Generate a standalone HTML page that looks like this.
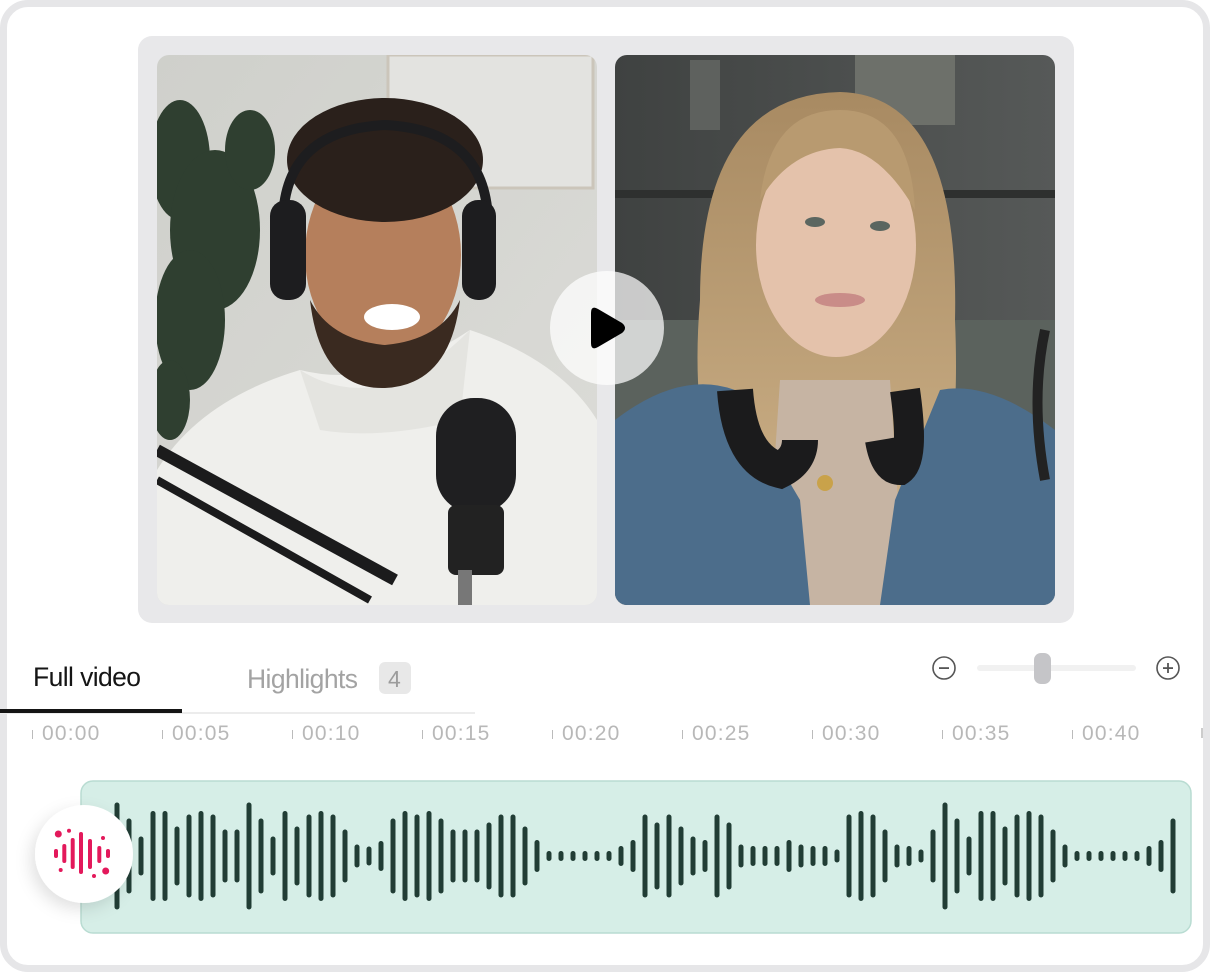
<!DOCTYPE html>
<html><head><meta charset="utf-8"><style>
*{margin:0;padding:0;box-sizing:border-box}
body{width:1210px;height:972px;background:#fff;position:relative;overflow:hidden;font-family:"Liberation Sans",sans-serif}
.card{position:absolute;left:0;top:0;width:1210px;height:972px;border:7px solid #e6e6e8;border-radius:28px;background:#fff}
.frame{position:absolute;left:138px;top:36px;width:936px;height:587px;background:#e8e8ea;border-radius:14px}
.t{position:absolute;font-size:26.5px;letter-spacing:-0.6px;line-height:30px}
.tl{position:absolute;top:722px;font-size:21px;letter-spacing:1.2px;color:#b8b8b8}
.tl i{display:inline-block;width:1px;height:9px;background:#bbb;margin-right:9px;vertical-align:1px}
</style></head><body>
<div class="card"></div>
<div class="frame"></div>
<svg style="position:absolute;left:0;top:0" width="1210" height="972">
<defs>
<clipPath id="cl"><rect x="157" y="55" width="440" height="550" rx="12"/></clipPath>
<clipPath id="cr"><rect x="615" y="55" width="440" height="550" rx="12"/></clipPath>
<linearGradient id="gl" x1="0" y1="0" x2="1" y2="1"><stop offset="0" stop-color="#cfd0cb"/><stop offset="1" stop-color="#dcdcd8"/></linearGradient>
<linearGradient id="gr" x1="0" y1="0" x2="1" y2="0"><stop offset="0" stop-color="#3f4241"/><stop offset="0.5" stop-color="#4b4e4d"/><stop offset="1" stop-color="#565958"/></linearGradient>
<linearGradient id="hair" x1="0" y1="0" x2="0" y2="1"><stop offset="0" stop-color="#a88a62"/><stop offset="1" stop-color="#c9ad84"/></linearGradient>
<filter id="sh" x="-50%" y="-50%" width="200%" height="200%"><feDropShadow dx="-4" dy="6" stdDeviation="8" flood-color="#000" flood-opacity="0.12"/></filter>
</defs>
<g clip-path="url(#cl)">
<rect x="157" y="55" width="440" height="550" fill="url(#gl)"/>
<rect x="388" y="55" width="205" height="133" fill="#e3e3e0" stroke="#cbc5ba" stroke-width="3"/>
<g fill="#2f3f30">
<ellipse cx="180" cy="160" rx="30" ry="60"/><ellipse cx="215" cy="230" rx="45" ry="80"/><ellipse cx="190" cy="320" rx="35" ry="70"/><ellipse cx="250" cy="150" rx="25" ry="40"/><ellipse cx="170" cy="400" rx="20" ry="40"/>
</g>
<path d="M157 470 Q200 400 300 370 Q380 390 470 330 Q560 360 597 420 L597 605 L157 605 Z" fill="#efefec"/>
<path d="M300 370 Q380 420 470 330 L460 420 Q380 440 320 430 Z" fill="#e4e4e0"/>
<ellipse cx="383" cy="255" rx="78" ry="105" fill="#b57f5c"/>
<path d="M310 300 Q320 390 385 388 Q450 385 460 300 Q440 340 385 345 Q330 340 310 300Z" fill="#3a2a20"/>
<ellipse cx="385" cy="160" rx="98" ry="62" fill="#2a201b"/>
<ellipse cx="392" cy="317" rx="28" ry="13" fill="#fff"/>
<path d="M283 220 Q285 130 385 125 Q485 130 488 220" fill="none" stroke="#1d1d1f" stroke-width="10"/>
<rect x="270" y="200" width="36" height="100" rx="16" fill="#1d1d1f"/>
<rect x="462" y="200" width="34" height="100" rx="16" fill="#1d1d1f"/>
<rect x="436" y="398" width="80" height="115" rx="38" fill="#1f1f21"/>
<rect x="448" y="505" width="56" height="70" rx="8" fill="#222"/>
<rect x="458" y="570" width="14" height="40" fill="#777"/>
<path d="M157 450 L395 580" stroke="#1b1b1c" stroke-width="12"/>
<path d="M157 480 L370 600" stroke="#1b1b1c" stroke-width="8"/>
</g>
<g clip-path="url(#cr)">
<rect x="615" y="55" width="440" height="550" fill="url(#gr)"/>
<rect x="855" y="55" width="100" height="70" fill="#6d706a"/>
<rect x="690" y="60" width="30" height="70" fill="#5e615e"/><rect x="615" y="190" width="440" height="8" fill="#2e302f"/>
<rect x="615" y="320" width="440" height="140" fill="#5b625d"/>
<path d="M700 300 Q700 95 840 92 Q960 95 955 320 Q960 440 940 500 L720 500 Q690 420 700 300Z" fill="url(#hair)"/>
<path d="M780 380 L890 380 L905 605 L765 605 Z" fill="#c6b4a3"/>
<ellipse cx="836" cy="245" rx="80" ry="112" fill="#e4c2ab"/>
<path d="M760 200 Q770 110 840 110 Q910 110 915 210 Q880 150 840 148 Q790 150 760 200Z" fill="#b89a70"/>
<ellipse cx="815" cy="222" rx="10" ry="5" fill="#5b6660"/><ellipse cx="880" cy="226" rx="10" ry="5" fill="#5b6660"/>
<ellipse cx="840" cy="300" rx="25" ry="7" fill="#c98c88"/>
<path d="M615 420 Q680 370 735 390 L800 500 L810 605 L615 605Z" fill="#4c6d8b"/>
<path d="M1055 430 Q990 380 940 390 L895 500 L880 605 L1055 605Z" fill="#4c6d8b"/>
<path d="M735 390 Q740 460 780 470 Q800 460 800 440" fill="none" stroke="#1b1b1c" stroke-width="36"/>
<path d="M880 440 Q885 470 900 470 Q915 460 905 390" fill="none" stroke="#1b1b1c" stroke-width="30"/>
<circle cx="825" cy="483" r="8" fill="#c9a24a"/>
<path d="M1045 330 Q1030 400 1045 480" stroke="#222" stroke-width="10" fill="none"/>
</g>
<circle cx="607" cy="328" r="57" fill="#fff" fill-opacity="0.72"/>
<path d="M591 313 Q591 305 598 309 L622 323 Q628 328 622 333 L598 347 Q591 351 591 343 Z" fill="#000"/>
<rect x="0" y="712" width="475" height="2" fill="#ececec"/>
<rect x="0" y="709" width="182" height="4" fill="#151515"/>
<rect x="379" y="662" width="32" height="32" rx="6" fill="#e8e8e8"/>
<circle cx="944" cy="668" r="11" fill="none" stroke="#555" stroke-width="1.6"/><rect x="939" y="667.2" width="10" height="1.8" fill="#555"/>
<circle cx="1168" cy="668" r="11" fill="none" stroke="#555" stroke-width="1.6"/><rect x="1163" y="667.2" width="10" height="1.8" fill="#555"/><rect x="1167.1" y="663" width="1.8" height="10" fill="#555"/>
<rect x="977" y="665" width="159" height="6" rx="3" fill="#f1f1f1"/>
<rect x="1034" y="653" width="17" height="31" rx="7" fill="#c5c5c8"/>
<rect x="1201" y="728" width="2" height="10" fill="#ccc"/>
<rect x="81" y="781" width="1110" height="152" rx="12" fill="#d6eee7" stroke="#b9dcd2" stroke-width="1.5"/>
<g id="bars" fill="#213d35"></g>
<circle cx="84" cy="854" r="49" fill="#fff" filter="url(#sh)"/>
<g fill="#e3195b" stroke="#e3195b" stroke-linecap="round">
<circle cx="58.3" cy="834" r="3.5" stroke="none"/><circle cx="69" cy="830.7" r="2" stroke="none"/>
<circle cx="103" cy="838" r="2" stroke="none"/><circle cx="60.7" cy="870" r="2" stroke="none"/>
<circle cx="94" cy="876" r="2" stroke="none"/><circle cx="105.7" cy="871" r="3.5" stroke="none"/>
<line x1="56" y1="851" x2="56" y2="856" stroke-width="4"/><line x1="108" y1="851" x2="108" y2="856" stroke-width="4"/>
<line x1="64.3" y1="846" x2="64.3" y2="861" stroke-width="4"/>
<line x1="72.7" y1="840" x2="72.7" y2="867" stroke-width="4"/>
<line x1="81" y1="834" x2="81" y2="872" stroke-width="4"/>
<line x1="90" y1="841" x2="90" y2="867" stroke-width="4"/>
<line x1="99.3" y1="848" x2="99.3" y2="861" stroke-width="4"/>
</g>
</svg>
<div class="t" style="left:33px;top:662px;color:#151515">Full video</div>
<div class="t" style="left:247px;top:664px;color:#a3a3a3">Highlights</div>
<div class="t" style="left:388px;top:664px;color:#9c9c9c;font-size:23px">4</div>
<div class="tl" style="left:32px"><i></i>00:00</div>
<div class="tl" style="left:162px"><i></i>00:05</div>
<div class="tl" style="left:292px"><i></i>00:10</div>
<div class="tl" style="left:422px"><i></i>00:15</div>
<div class="tl" style="left:552px"><i></i>00:20</div>
<div class="tl" style="left:682px"><i></i>00:25</div>
<div class="tl" style="left:812px"><i></i>00:30</div>
<div class="tl" style="left:942px"><i></i>00:35</div>
<div class="tl" style="left:1072px"><i></i>00:40</div>
<script>
var h=[107,75,39,90,90,59,83,90,83,53,53,107,75,39,90,59,83,90,83,53,23,19,30,75,90,83,90,75,53,53,53,67,83,83,59,32,10,10,10,10,10,10,20,32,83,67,83,59,39,32,83,67,23,20,20,20,32,23,20,20,13,83,90,83,53,23,20,13,53,107,75,39,90,90,59,83,90,83,53,23,10,10,10,10,10,10,20,32,75];
var g=document.getElementById('bars'),s='';
for(var i=0;i<h.length;i++){var x=117+12*i-2.5;s+='<rect x="'+x+'" y="'+(856-h[i]/2)+'" width="5" height="'+h[i]+'" rx="2.5"/>';}
g.innerHTML=s;
</script>
</body></html>
